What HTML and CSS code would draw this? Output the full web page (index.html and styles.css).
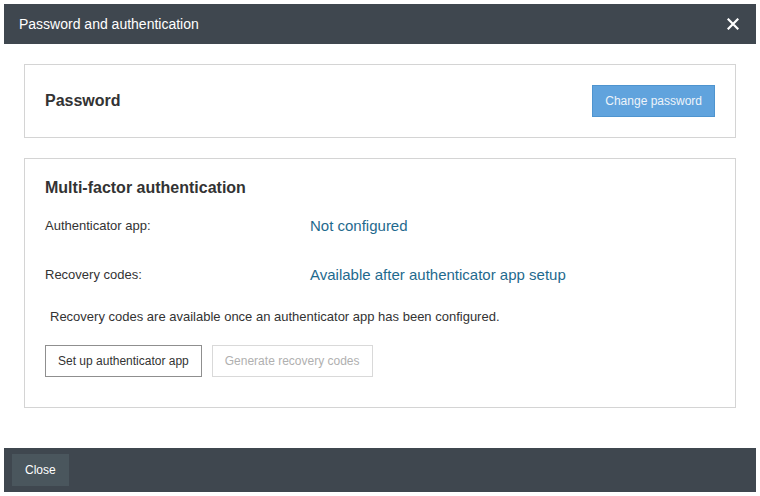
FILE: index.html
```html
<!DOCTYPE html>
<html>
<head>
<meta charset="utf-8">
<link rel="stylesheet" href="styles.css">
</head>
<body>
<div class="dialog">
  <div class="dialog-header">
    <span class="dialog-title">Password and authentication</span>
    <svg class="close-x" width="12" height="12" viewBox="0 0 12 12"><path d="M1.5 1.5 L10.5 10.5 M10.5 1.5 L1.5 10.5" stroke="#fff" stroke-width="2.2" stroke-linecap="square"/></svg>
  </div>
  <div class="dialog-body">
    <section class="card card-password">
      <h2 class="card-title">Password</h2>
      <button class="btn btn-primary">Change password</button>
    </section>
    <section class="card card-mfa">
      <h2 class="card-title">Multi-factor authentication</h2>
      <div class="row">
        <div class="row-label">Authenticator app:</div>
        <div class="row-value">Not configured</div>
      </div>
      <div class="row">
        <div class="row-label">Recovery codes:</div>
        <div class="row-value">Available after authenticator app setup</div>
      </div>
      <p class="note">Recovery codes are available once an authenticator app has been configured.</p>
      <div class="actions">
        <button class="btn btn-default">Set up authenticator app</button>
        <button class="btn btn-disabled" disabled>Generate recovery codes</button>
      </div>
    </section>
  </div>
  <div class="dialog-footer">
    <button class="btn btn-close">Close</button>
  </div>
</div>
</body>
</html>
```

FILE: styles.css
```css
html, body {
  margin: 0;
  padding: 0;
  background: #ffffff;
}
body {
  font-family: "Liberation Sans", Arial, sans-serif;
  color: #333333;
}
.dialog {
  margin: 4px;
  height: 488px;
  display: flex;
  flex-direction: column;
  background: #ffffff;
}
.dialog-header {
  height: 40px;
  flex: none;
  background: #3f474f;
  display: flex;
  align-items: center;
  justify-content: space-between;
  padding: 0 17px 0 15px;
}
.dialog-title {
  color: #ffffff;
  font-size: 14px;
}
.close-x {
  display: block;
}
.dialog-body {
  flex: 1;
  padding: 20px 20px 0 20px;
}
.card {
  border: 1px solid #d4d4d4;
  padding: 20px 20px;
}
.card-title {
  margin: 0;
  font-size: 16px;
  font-weight: bold;
  color: #333333;
  line-height: 18px;
}
.card-password {
  display: flex;
  align-items: center;
  justify-content: space-between;
}
.card-mfa {
  margin-top: 20px;
  padding-top: 19px;
  padding-bottom: 30px;
}
.card-mfa .card-title {
  margin-top: 1px;
  margin-bottom: 4px;
}
.row {
  display: flex;
  align-items: center;
  height: 49px;
}
.row-label {
  width: 265px;
  font-size: 13px;
  color: #333333;
}
.row-value {
  font-size: 15px;
  color: #1f6a8e;
}
.note {
  margin: 10px 0 0 5px;
  font-size: 13px;
  line-height: 16px;
  color: #333333;
}
.actions {
  display: flex;
  gap: 10px;
  margin-top: 20px;
}
.btn {
  font-family: "Liberation Sans", Arial, sans-serif;
  font-size: 12px;
  height: 32px;
  padding: 0 12px;
  border-radius: 0;
  cursor: pointer;
}
.btn-primary {
  height: 32px;
  background: #60a3dd;
  border: 1px solid #4e94cf;
  color: #eef4fa;
  padding: 0 12px;
}
.btn-default {
  background: #ffffff;
  border: 1px solid #8f8f8f;
  color: #333333;
}
.btn-disabled {
  background: #ffffff;
  border: 1px solid #d9d9d9;
  color: #b0b0b0;
  cursor: default;
}
.dialog-footer {
  height: 44px;
  flex: none;
  background: #3f474f;
  display: flex;
  align-items: center;
  padding: 0 8px;
}
.btn-close {
  background: #4a565d;
  border: none;
  color: #ffffff;
  height: 32px;
  padding: 0 13px;
  font-size: 12px;
}
```
